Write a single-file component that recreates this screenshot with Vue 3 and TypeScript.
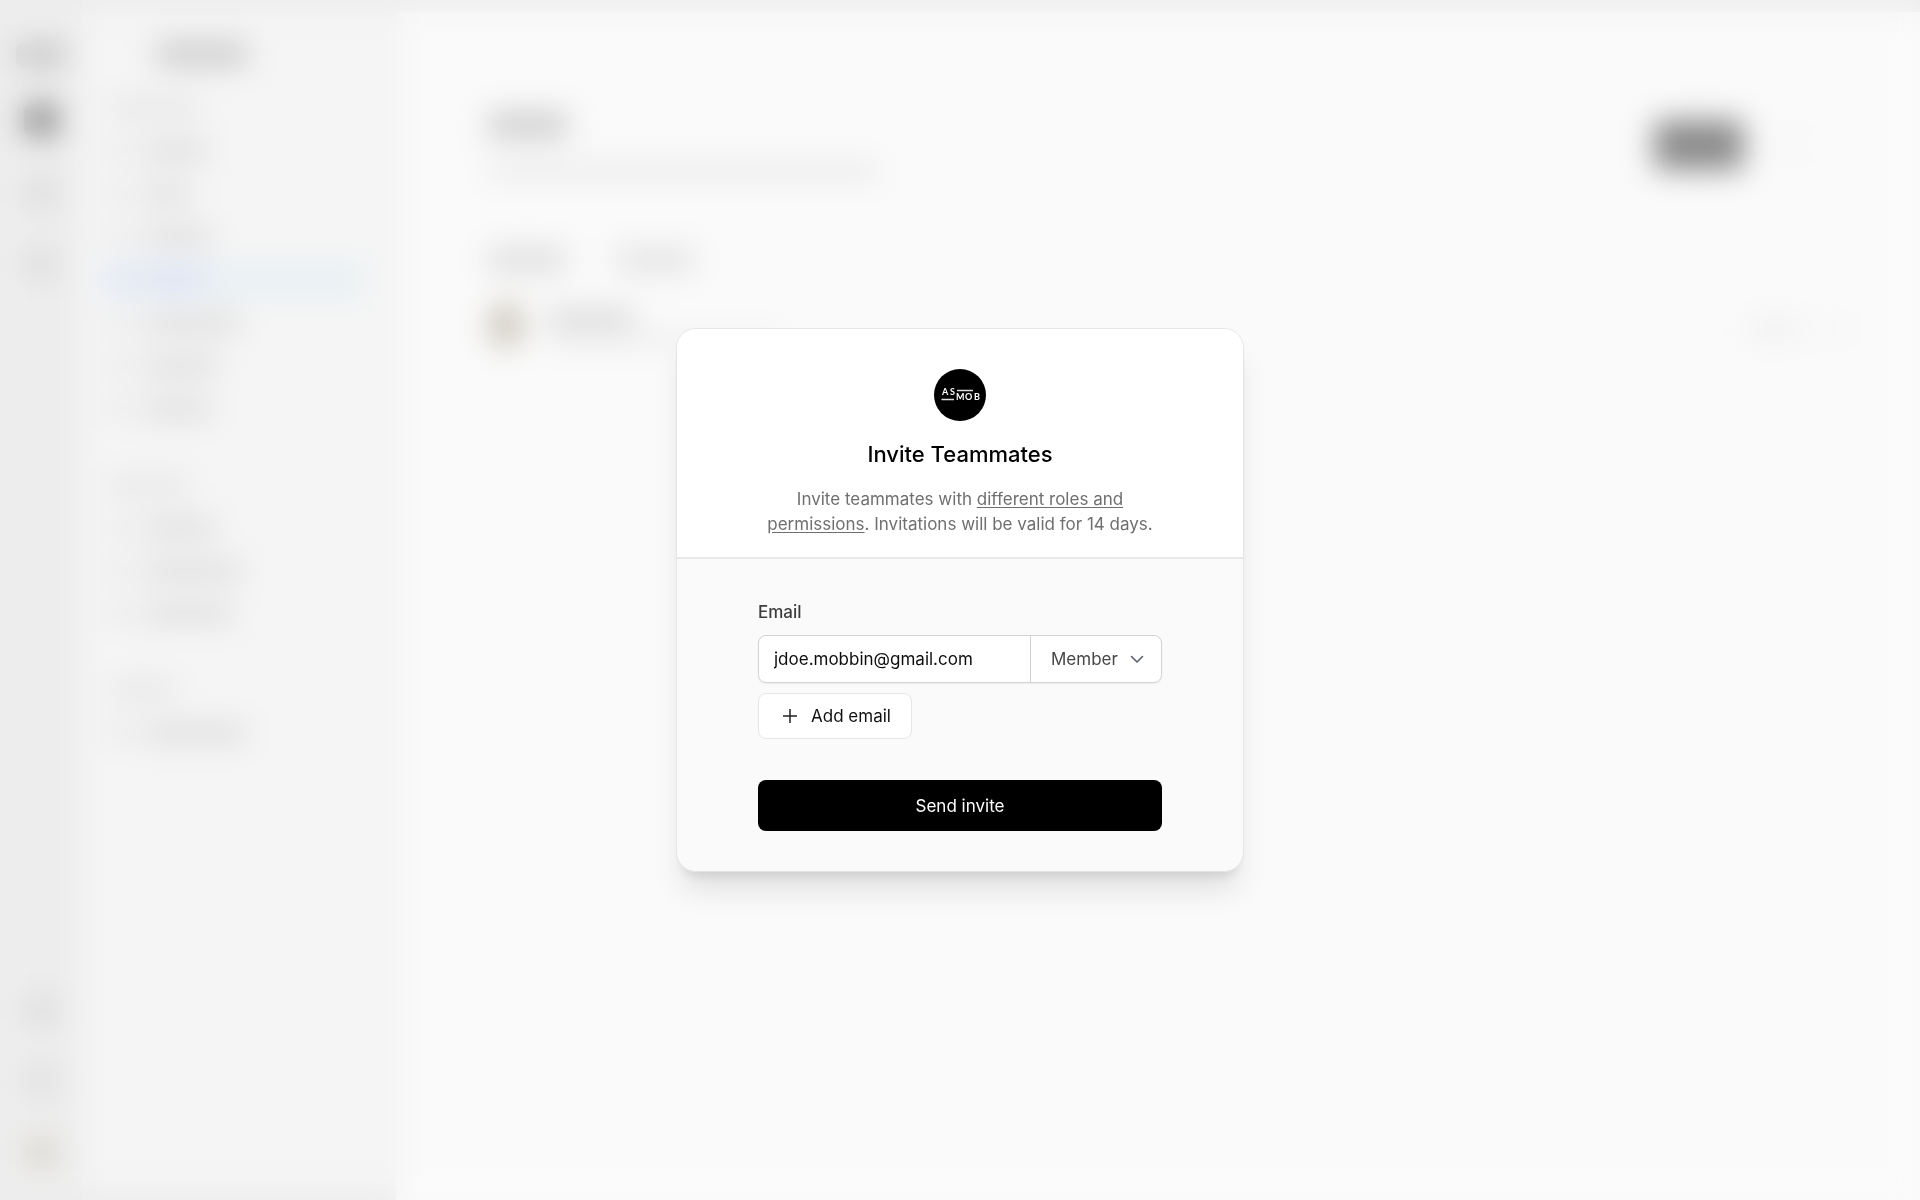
<script setup lang="ts">
import { ref } from 'vue'

interface NavRow {
  width: number
  kind?: 'heading' | 'active'
}

const groups: NavRow[][] = [
  [
    { width: 90, kind: 'heading' },
    { width: 64 },
    { width: 46 },
    { width: 68 },
    { width: 60, kind: 'active' },
    { width: 96 },
    { width: 74 },
    { width: 68 },
  ],
  [{ width: 78, kind: 'heading' }, { width: 72 }, { width: 98 }, { width: 88 }],
  [{ width: 66, kind: 'heading' }, { width: 102 }],
]

const email = ref('jdoe.mobbin@gmail.com')
const role = ref('Member')
</script>

<template>
  <div class="screen">
    <div class="app" aria-hidden="true">
      <div class="rail">
        <span class="glyph brand"></span>
        <span class="glyph current"></span>
        <span class="glyph"></span>
        <span class="glyph"></span>
        <span class="spacer"></span>
        <span class="glyph"></span>
        <span class="glyph soft"></span>
        <span class="glyph user"></span>
      </div>
      <div class="side">
        <div class="side-title"></div>
        <div v-for="(group, g) in groups" :key="g" class="group">
          <div v-for="(row, r) in group" :key="r" class="row" :class="row.kind">
            <span v-if="row.kind !== 'heading'" class="row-icon"></span>
            <span class="row-text" :style="{ width: row.width + 'px' }"></span>
          </div>
        </div>
      </div>
      <div class="main">
        <div class="head">
          <div class="head-text">
            <div class="bar heading-bar"></div>
            <div class="bar subtitle-bar"></div>
          </div>
          <div class="bar action-bar"></div>
          <div class="bar more-bar"></div>
        </div>
        <div class="tabs">
          <div class="bar tab-bar"></div>
          <div class="bar tab-bar second"></div>
        </div>
        <div class="person">
          <div class="avatar"></div>
          <div class="person-text">
            <div class="bar name-bar"></div>
            <div class="bar mail-bar"></div>
          </div>
          <div class="bar role-bar"></div>
          <div class="bar menu-bar"></div>
        </div>
      </div>
    </div>

    <div class="overlay">
      <form class="dialog" role="dialog" aria-labelledby="invite-title" @submit.prevent>
        <header class="top">
          <svg class="logo" viewBox="0 0 52 52" role="img" aria-label="AS MOB">
            <circle cx="26" cy="26" r="26" fill="#000" />
            <g fill="#fff" font-family="Lato, sans-serif" font-weight="700" font-size="9">
              <text x="8" y="26">A</text>
              <text x="16" y="26">S</text>
              <text x="22" y="31">M</text>
              <text x="31" y="31">O</text>
              <text x="40" y="31">B</text>
            </g>
            <path d="M23 21.5h16M7.500 30.500h12.500" stroke="#ddd" stroke-width="1.500" />
          </svg>
          <h1 id="invite-title">Invite Teammates</h1>
          <p>
            Invite teammates with <a href="#roles">different roles and permissions</a>. Invitations
            will be valid for 14 days.
          </p>
        </header>
        <div class="body">
          <label class="label" for="email">Email</label>
          <div class="field">
            <input id="email" v-model="email" type="email" />
            <div class="picker">
              <select v-model="role" aria-label="Role">
                <option>Member</option>
                <option>Owner</option>
              </select>
              <svg class="chevron" viewBox="0 0 14 14" aria-hidden="true">
                <path d="M1.500 4.500 7 10l5.500-5.500" />
              </svg>
            </div>
          </div>
          <button type="button" class="add">
            <svg viewBox="0 0 14 14" aria-hidden="true"><path d="M7 0v14M0 7h14" /></svg>
            Add email
          </button>
          <button type="submit" class="send">Send invite</button>
        </div>
      </form>
    </div>
  </div>
</template>

<style>
body {
  margin: 0;
}
</style>

<style scoped>
.screen,
.screen * {
  box-sizing: border-box;
}

.screen {
  position: relative;
  min-height: 100vh;
  font-family: Inter, 'Liberation Sans', sans-serif;
}

/* Page behind the dialog */
.app {
  display: flex;
  min-height: 100vh;
  background: #eee;
}

.rail {
  display: flex;
  flex-direction: column;
  align-items: center;
  width: 82px;
  padding: 43px 0 34px;
  gap: 43px;
  background: #ededed;
}

.glyph {
  width: 32px;
  height: 28px;
  border-radius: 8px;
  background: #dcdcdc;
}

.glyph.brand {
  width: 50px;
  height: 24px;
  margin-bottom: -6px;
  background: #c6c6c6;
}

.glyph.current {
  width: 34px;
  height: 32px;
  background: #8c8c8c;
}

.glyph.soft {
  background: #dfdfdf;
}

.glyph.user {
  border-radius: 50%;
  background: #d6d2c8;
}

.spacer {
  flex: 1;
}

.side {
  flex: none;
  width: 308px;
  margin: 16px 6px 16px 0;
  padding: 26px 28px 0 20px;
  background: #f5f5f5;
}

.side-title {
  width: 92px;
  height: 24px;
  margin: 0 0 20px 54px;
  border-radius: 6px;
  background: #cbcbcb;
}

.group {
  margin-bottom: 33px;
}

.row {
  display: flex;
  align-items: center;
  gap: 14px;
  height: 43px;
  padding: 0 8px;
}

.row-icon {
  width: 20px;
  height: 18px;
  background: #e5e5e5;
}

.row-text {
  height: 18px;
  background: #dcdcdc;
}

.heading .row-text {
  background: #e5e5e5;
}

.row.active {
  height: 35px;
  margin: 4px 0;
  background: #e8f0f4;
}

.active .row-icon,
.active .row-text {
  background: #d8def5;
}

.main {
  flex: 1;
  min-width: 0;
  margin-top: 12px;
  padding: 100px 70px 0 92px;
  background: #fafafa;
}

.head {
  display: flex;
  height: 134px;
}

.head-text {
  flex: 1;
}

.heading-bar {
  width: 80px;
  height: 26px;
  background: #cdcdcd;
}

.subtitle-bar {
  width: 390px;
  height: 18px;
  margin-top: 24px;
  background: #eaeaea;
}

.action-bar {
  width: 90px;
  height: 50px;
  margin: 8px 36px 0 0;
  border-radius: 8px;
  background: #8b8b8b;
}

.more-bar {
  width: 24px;
  height: 20px;
  margin: 22px 46px 0 0;
  background: #f4f4f4;
}

.tabs {
  display: flex;
  gap: 50px;
  height: 56px;
}

.tab-bar {
  width: 78px;
  height: 28px;
  background: #e1e1e1;
}

.tab-bar.second {
  background: #e6e6e6;
}

.person {
  display: flex;
}

.avatar {
  width: 36px;
  height: 46px;
  border-radius: 50%;
  background: #cdc7bc;
}

.person-text {
  flex: 1;
  padding: 7px 0 0 24px;
}

.name-bar {
  width: 86px;
  height: 18px;
  background: #d7d7d7;
}

.mail-bar {
  width: 230px;
  height: 14px;
  margin-top: 6px;
  background: #ececec;
}

.role-bar {
  width: 50px;
  height: 22px;
  margin: 16px 20px 0 0;
  background: #f0f0f0;
}

.menu-bar {
  width: 30px;
  height: 18px;
  margin-top: 18px;
  background: #f5f5f5;
}

/* Dialog */
.overlay {
  position: absolute;
  inset: 0;
  display: flex;
  align-items: center;
  justify-content: center;
  backdrop-filter: blur(15px);
}

.dialog {
  width: 568px;
  max-width: 100%;
  border: 1px solid #e5e5e5;
  border-radius: 20px;
  background: #fafafa;
  overflow: hidden;
  box-shadow: 0 24px 30px -6px rgba(0, 0, 0, 0.1), 0 10px 12px -6px rgba(0, 0, 0, 0.1);
}

.top {
  display: flex;
  flex-direction: column;
  align-items: center;
  padding: 40px 80px 20px;
  border-bottom: 2px solid #e8e8e8;
  background: #fff;
  text-align: center;
}

.logo {
  width: 52px;
  height: 52px;
}

h1 {
  margin: 18px 0 18px;
  font-size: 22px;
  line-height: 30px;
  font-weight: 500;
  color: #000;
}

p {
  margin: 0;
  font-size: 17px;
  line-height: 25px;
  color: #6f6f6f;
}

p a {
  color: inherit;
  text-underline-offset: 2px;
}

.body {
  display: flex;
  flex-direction: column;
  padding: 40px 81px;
}

.label {
  margin-bottom: 10px;
  font-size: 17px;
  line-height: 26px;
  font-weight: 500;
  color: #3d3d3d;
}

.field {
  display: flex;
  height: 48px;
  margin-bottom: 10px;
  border: 1px solid #d2d2d2;
  border-radius: 8px;
  background: #fff;
  box-shadow: 0 1px 2px rgba(0, 0, 0, 0.06);
  overflow: hidden;
}

.field input {
  flex: 1;
  min-width: 0;
  padding: 0 15px;
  border: 0;
  outline: 0;
  background: none;
  font: inherit;
  font-size: 17px;
  color: #0d0d0d;
}

.picker {
  position: relative;
  width: 131px;
  border-left: 1px solid #d2d2d2;
}

.picker select {
  width: 100%;
  height: 100%;
  padding: 0 40px 0 20px;
  border: 0;
  outline: 0;
  appearance: none;
  background: none;
  font: inherit;
  font-size: 17px;
  color: #474747;
}

.chevron {
  position: absolute;
  top: 16px;
  right: 17px;
  width: 14px;
  height: 14px;
  fill: none;
  stroke: #5c5f6b;
  stroke-width: 1.600;
  stroke-linecap: round;
  stroke-linejoin: round;
  pointer-events: none;
}

.add {
  display: flex;
  align-items: center;
  align-self: flex-start;
  gap: 14px;
  height: 46px;
  margin-bottom: 41px;
  padding: 0 20px 0 24px;
  border: 1px solid #e6e6e6;
  border-radius: 8px;
  background: #fff;
  font: inherit;
  font-size: 17px;
  color: #111;
}

.add svg {
  width: 14px;
  height: 14px;
  stroke: #222;
  stroke-width: 1.500;
}

.send {
  height: 51px;
  border: 0;
  border-radius: 8px;
  background: #000;
  font: inherit;
  font-size: 17px;
  color: #fff;
}
</style>
